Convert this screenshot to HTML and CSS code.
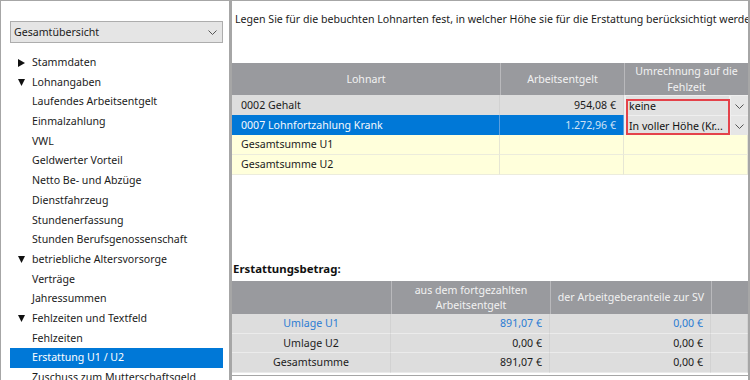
FILE: index.html
```html
<!DOCTYPE html>
<html lang="de">
<head>
    <meta charset="UTF-8">
    <title>Erstattung U1 / U2</title>
    <link rel="stylesheet" href="styles.css">
</head>
<body>
    <div class="window">
        <!-- Navigation links -->
        <aside class="sidebar">
            <div class="select">
                <span>Gesamtübersicht</span>
                <svg class="chev" width="9" height="5" viewBox="0 0 9 5"><polyline points="0.5,0.5 4.5,4.5 8.5,0.5" fill="none" stroke="#555" stroke-width="1"/></svg>
            </div>
            <ul class="tree">
                <li><svg class="tri" width="7" height="8" viewBox="0 0 7 8"><polygon points="0,0 7,4 0,8" fill="#111"/></svg>Stammdaten</li>
                <li><svg class="tri" width="7" height="7" viewBox="0 0 7 7"><polygon points="0,0 7,0 3.5,7" fill="#111"/></svg>Lohnangaben</li>
                <li>Laufendes Arbeitsentgelt</li>
                <li>Einmalzahlung</li>
                <li>VWL</li>
                <li>Geldwerter Vorteil</li>
                <li>Netto Be- und Abzüge</li>
                <li>Dienstfahrzeug</li>
                <li>Stundenerfassung</li>
                <li>Stunden Berufsgenossenschaft</li>
                <li><svg class="tri" width="7" height="7" viewBox="0 0 7 7"><polygon points="0,0 7,0 3.5,7" fill="#111"/></svg>betriebliche Altersvorsorge</li>
                <li>Verträge</li>
                <li>Jahressummen</li>
                <li><svg class="tri" width="7" height="7" viewBox="0 0 7 7"><polygon points="0,0 7,0 3.5,7" fill="#111"/></svg>Fehlzeiten und Textfeld</li>
                <li>Fehlzeiten</li>
                <li class="active">Erstattung U1 / U2</li>
                <li>Zuschuss zum Mutterschaftsgeld</li>
            </ul>
        </aside>

        <div class="splitter"></div>

        <!-- Inhalt rechts -->
        <main class="content">
            <p class="intro">Legen Sie für die bebuchten Lohnarten fest, in welcher Höhe sie für die Erstattung berücksichtigt werden sollen.</p>

            <div class="grid lohn">
                <div class="th">Lohnart</div>
                <div class="th">Arbeitsentgelt</div>
                <div class="th">Umrechnung auf die<br>Fehlzeit</div>

                <div class="td gray">0002 Gehalt</div>
                <div class="td gray num">954,08 €</div>
                <div class="td combo-cell">
                    <div class="combo">keine</div>
                    <div class="combo-btn"><svg width="9" height="5" viewBox="0 0 9 5"><polyline points="0.5,0.5 4.5,4.5 8.5,0.5" fill="none" stroke="#555" stroke-width="1"/></svg></div>
                </div>

                <div class="td sel">0007 Lohnfortzahlung Krank</div>
                <div class="td sel num">1.272,96 €</div>
                <div class="td combo-cell">
                    <div class="combo">In voller Höhe (Kr...</div>
                    <div class="combo-btn"><svg width="9" height="5" viewBox="0 0 9 5"><polyline points="0.5,0.5 4.5,4.5 8.5,0.5" fill="none" stroke="#555" stroke-width="1"/></svg></div>
                </div>

                <div class="td sum">Gesamtsumme U1</div>
                <div class="td sum"></div>
                <div class="td sum"></div>

                <div class="td sum">Gesamtsumme U2</div>
                <div class="td sum"></div>
                <div class="td sum"></div>
            </div>

            <div class="mark"></div>

            <h3 class="erst-title">Erstattungsbetrag:</h3>

            <div class="grid erst">
                <div class="th"></div>
                <div class="th">aus dem fortgezahlten<br>Arbeitsentgelt</div>
                <div class="th">der Arbeitgeberanteile zur SV</div>
                <div class="th"></div>

                <div class="td gray center link">Umlage U1</div>
                <div class="td gray num link">891,07 €</div>
                <div class="td gray num link">0,00 €</div>
                <div class="td gray"></div>

                <div class="td gray center">Umlage U2</div>
                <div class="td gray num">0,00 €</div>
                <div class="td gray num">0,00 €</div>
                <div class="td gray"></div>

                <div class="td gray center">Gesamtsumme</div>
                <div class="td gray num">891,07 €</div>
                <div class="td gray num">0,00 €</div>
                <div class="td gray"></div>
            </div>
        </main>
    </div>
</body>
</html>
```

FILE: styles.css
```css
body {
    margin: 0;
    font-family: "Noto Sans", "Open Sans", sans-serif;
    font-size: 10.6px;
    color: #1b1b1b;
    background: #fff;
}

/* Fensterrahmen */
.window {
    width: 750px;
    height: 380px;
    box-sizing: border-box;
    border-top: 1px solid #a6a6a6;
    border-left: 1px solid #a6a6a6;
    border-right: 2px solid #a6a6a6;
    display: flex;
    overflow: hidden;
}

/* linke Navigation */
.sidebar {
    width: 228px;
    flex: none;
    padding-top: 20px;
    box-sizing: border-box;
}

.select {
    margin-left: 9px;
    width: 213px;
    height: 22px;
    box-sizing: border-box;
    border: 1px solid #adadad;
    background: #e5e5e5;
    display: flex;
    align-items: center;
    justify-content: space-between;
    padding: 0 5px 0 3px;
}

.tree {
    list-style: none;
    margin: 10px 0 0 9px;
    padding: 0;
    width: 213px;
}

.tree li {
    height: 19.7px;
    line-height: 19.7px;
    padding-left: 22px;
    white-space: nowrap;
}

.tree li.active {
    background: #0078d7;
    color: #fff;
}

.tri {
    display: inline-block;
    margin-left: -14px;
    margin-right: 7px;
    vertical-align: -0.5px;
}

.splitter {
    width: 3px;
    flex: none;
    background: #a6a6a6;
}

/* rechter Bereich */
.content {
    flex: 1;
    height: 375px;
    box-sizing: border-box;
    border-bottom: 1px solid #a6a6a6;
    overflow: hidden;
    position: relative;
}

.intro {
    margin: 0;
    height: 62px;
    box-sizing: border-box;
    padding: 10px 0 0 3px;
    line-height: 16px;
    white-space: nowrap;
    overflow: hidden;
}

.grid {
    display: grid;
}

.lohn {
    grid-template-columns: 268px 124px 124px;
    grid-template-rows: 32px repeat(4, 20px);
}

.erst {
    grid-template-columns: 159px 159px 161px 37px;
    grid-template-rows: 33px repeat(3, 19.7px);
}

.th {
    background: #999a9e;
    color: #f2f2f2;
    display: flex;
    align-items: center;
    justify-content: center;
    text-align: center;
    line-height: 16px;
    white-space: nowrap;
    border-left: 1px solid #b9b9bc;
}

.th:first-child {
    border-left: none;
}

.erst .th {
    line-height: 15px;
}

.td {
    line-height: 20px;
    padding: 0 9px;
    white-space: nowrap;
    overflow: hidden;
    box-sizing: border-box;
    border-right: 1px solid #d2d2d2;
}

.td.gray {
    background: #dddddd;
}

.erst .td.gray {
    border-bottom: 1px solid #ebebeb;
    line-height: 18.7px;
}

.td.sel {
    background: #0078d7;
    color: #f6f9fd;
    border-right-color: #5a9fdf;
}

.td.sel.num {
    color: #cfe2f6;
}

.td.sum {
    background: #ffffdb;
    border-right-color: #e6e6d4;
    border-bottom: 1px solid #ececdc;
    line-height: 19px;
}

.td.num {
    text-align: right;
    padding-right: 7px;
}

.td.center {
    text-align: center;
}

.td.link {
    color: #2b7cd3;
}

.combo-cell {
    padding: 1px 0 0 2px;
    background: #efefef;
    display: flex;
    gap: 2px;
    border-right: none;
}

.combo {
    width: 103px;
    height: 19px;
    flex: none;
    background: #e1e1e1;
    line-height: 21px;
    padding-left: 3px;
    box-sizing: border-box;
    overflow: hidden;
    color: #111;
}

.combo-btn {
    flex: 1;
    height: 19px;
    background: #e6e6e6;
    display: flex;
    align-items: center;
    justify-content: center;
    padding-top: 2px;
    box-sizing: border-box;
}

/* rote Markierung über den Auswahlfeldern */
.mark {
    position: absolute;
    left: 394px;
    top: 98px;
    width: 104px;
    height: 36px;
    box-sizing: border-box;
    border: 2px solid #e4424a;
}

.erst-title {
    margin: 86px 0 0;
    height: 20px;
    line-height: 16px;
    padding-left: 1px;
    font-size: 11.4px;
    font-weight: bold;
    color: #111;
}
```
